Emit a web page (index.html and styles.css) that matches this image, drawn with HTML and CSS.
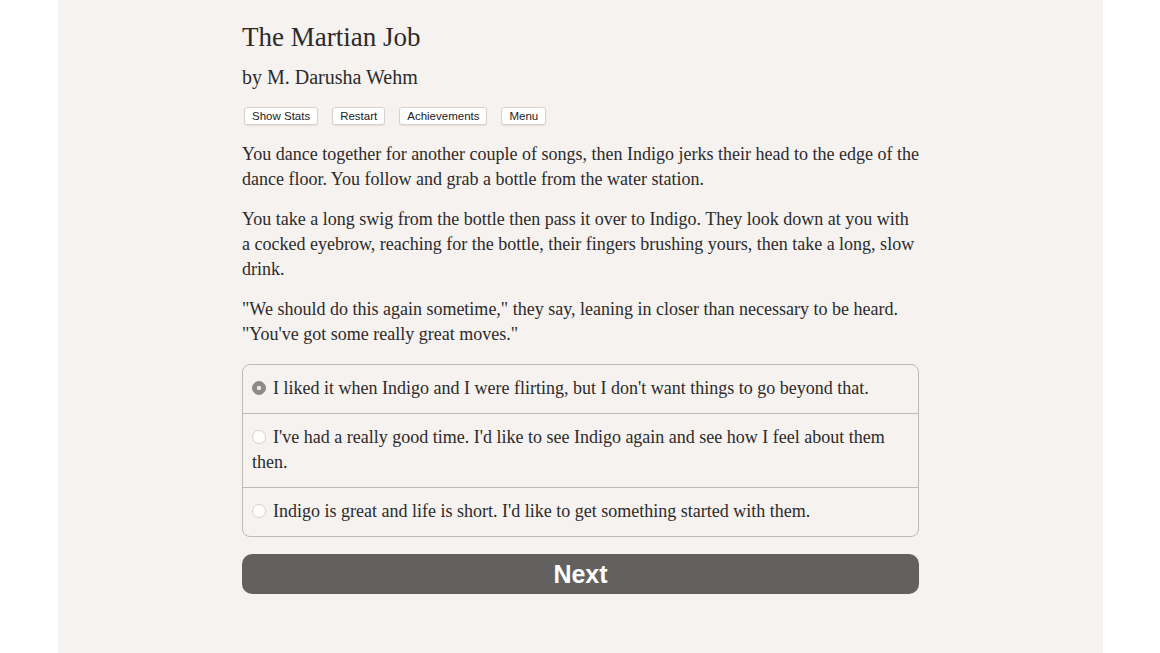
FILE: index.html
```html
<!DOCTYPE html>
<html lang="en">
<head>
    <meta charset="UTF-8">
    <title>The Martian Job</title>
    <link rel="stylesheet" href="styles.css">
</head>
<body>
    <div class="page">
        <div class="story">
            <h1 class="title">The Martian Job</h1>
            <h2 class="author">by M. Darusha Wehm</h2>
            <div class="toolbar">
                <button class="tool-button">Show Stats</button>
                <button class="tool-button">Restart</button>
                <button class="tool-button">Achievements</button>
                <button class="tool-button">Menu</button>
            </div>
            <p>You dance together for another couple of songs, then Indigo jerks their head to the edge of the dance floor. You follow and grab a bottle from the water station.</p>
            <p>You take a long swig from the bottle then pass it over to Indigo. They look down at you with a cocked eyebrow, reaching for the bottle, their fingers brushing yours, then take a long, slow drink.</p>
            <p>"We should do this again sometime," they say, leaning in closer than necessary to be heard. "You've got some really great moves."</p>
            <form class="choices">
                <label class="choice">
                    <input type="radio" name="choice" checked><span class="radio"></span>I liked it when Indigo and I were flirting, but I don't want things to go beyond that.
                </label>
                <label class="choice">
                    <input type="radio" name="choice"><span class="radio"></span>I've had a really good time. I'd like to see Indigo again and see how I feel about them then.
                </label>
                <label class="choice">
                    <input type="radio" name="choice"><span class="radio"></span>Indigo is great and life is short. I'd like to get something started with them.
                </label>
            </form>
            <button class="next-button">Next</button>
        </div>
    </div>
</body>
</html>
```

FILE: styles.css
```css
/* Umumiy */
body {
    margin: 0;
    background: #fff;
    font-family: "Liberation Serif", serif;
    color: #2b2b2b;
}

.page {
    width: 1045px;
    height: 653px;
    margin-left: 58px;
    background-color: #f6f2ef;
    box-sizing: border-box;
    padding-top: 19px;
}

.story {
    width: 677px;
    margin-left: 184px;
}

.title {
    margin: 0;
    font-size: 27px;
    font-weight: normal;
    line-height: 36px;
}

.author {
    margin: 7px 0 0;
    font-size: 20px;
    font-weight: normal;
    line-height: 30px;
}

/* Tugmalar */
.toolbar {
    display: flex;
    gap: 14px;
    margin: 15px 0 17px 2px;
}

.tool-button {
    font-family: "Liberation Sans", Arial, sans-serif;
    font-size: 11.5px;
    color: #222;
    background: #fff;
    border: 1px solid #d6d3d0;
    border-radius: 3px;
    padding: 0 7px;
    height: 18px;
    box-shadow: 0 1px 1px rgba(0,0,0,0.08);
}

.story p {
    margin: 0 0 15px;
    font-size: 18px;
    line-height: 25px;
}

/* Tanlovlar */
.choices {
    margin-top: 17px;
    border: 1px solid #bdbab7;
    border-radius: 8px;
}

.choice {
    display: block;
    padding: 11px 9px 12px;
    font-size: 18px;
    line-height: 25px;
    border-top: 1px solid #bdbab7;
}

.choice:first-child {
    border-top: none;
}

.choice input {
    display: none;
}

.radio {
    display: inline-block;
    width: 12px;
    height: 12px;
    border: 1px solid #d4d2d0;
    border-radius: 50%;
    background: #fff;
    margin-right: 7px;
    vertical-align: -1px;
    box-sizing: content-box;
}

.choice input:checked + .radio {
    background: #8d8b8a;
    border-color: #8d8b8a;
    background-image: radial-gradient(circle, #e8e6e4 0 2px, transparent 2.5px);
}

.next-button {
    display: block;
    width: 100%;
    height: 40px;
    margin-top: 17px;
    background-color: #636160;
    color: #fff;
    border: none;
    border-radius: 10px;
    font-family: "Liberation Sans", Arial, sans-serif;
    font-weight: bold;
    font-size: 25px;
}
```
